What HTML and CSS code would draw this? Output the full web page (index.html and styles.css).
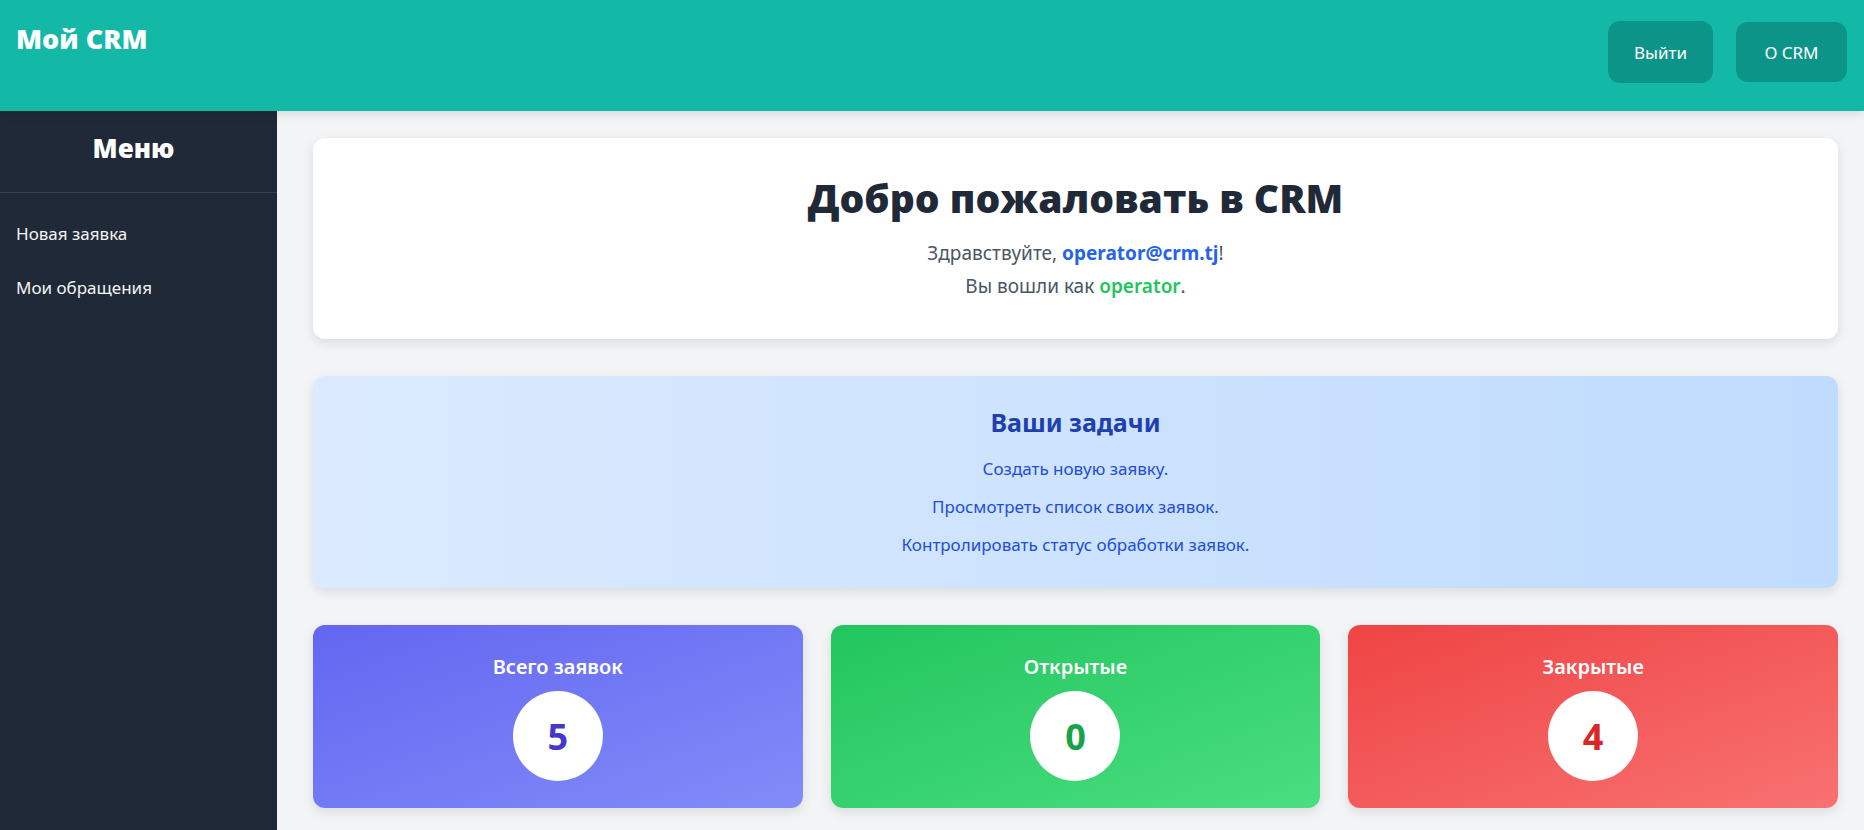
FILE: index.html
```html
<!DOCTYPE html>
<html lang="ru">
<head>
<meta charset="utf-8">
<title>Мой CRM</title>
<link rel="stylesheet" href="styles.css">
</head>
<body>
<header class="topbar">
  <h1 class="brand">Мой CRM</h1>
  <nav class="actions">
    <button class="btn btn-logout">Выйти</button>
    <a class="btn btn-about" href="#">О CRM</a>
  </nav>
</header>
<div class="layout">
  <aside class="sidebar">
    <h2 class="sidebar-title">Меню</h2>
    <ul class="menu">
      <li><a href="#">Новая заявка</a></li>
      <li><a href="#">Мои обращения</a></li>
    </ul>
  </aside>
  <main class="content">
    <section class="card welcome">
      <h2 class="welcome-title">Добро пожаловать в CRM</h2>
      <p class="welcome-line">Здравствуйте, <strong class="email">operator@crm.tj</strong>!</p>
      <p class="welcome-line">Вы вошли как <span class="role">operator</span>.</p>
    </section>
    <section class="card tasks">
      <h3 class="tasks-title">Ваши задачи</h3>
      <ul class="tasks-list">
        <li>Создать новую заявку.</li>
        <li>Просмотреть список своих заявок.</li>
        <li>Контролировать статус обработки заявок.</li>
      </ul>
    </section>
    <section class="stats">
      <div class="stat stat-total">
        <h4 class="stat-title">Всего заявок</h4>
        <div class="stat-value">5</div>
      </div>
      <div class="stat stat-open">
        <h4 class="stat-title">Открытые</h4>
        <div class="stat-value">0</div>
      </div>
      <div class="stat stat-closed">
        <h4 class="stat-title">Закрытые</h4>
        <div class="stat-value">4</div>
      </div>
    </section>
  </main>
</div>
</body>
</html>
```
FILE: styles.css
```css
* { box-sizing: border-box; }

html, body {
  margin: 0;
  padding: 0;
}

body {
  font-family: "Noto Sans", "Open Sans", sans-serif;
  background: #f3f4f6;
  color: #1f2937;
  height: 830px;
  overflow: hidden;
}

.topbar {
  height: 111px;
  background: #14b8a6;
  display: flex;
  justify-content: space-between;
  align-items: flex-start;
  padding: 0 17px 0 16px;
  box-shadow: 0 2px 10px rgba(0, 0, 0, 0.12);
  position: relative;
  z-index: 2;
}

.brand {
  margin: 0;
  padding-top: 19px;
  font-family: "Open Sans", "Noto Sans", sans-serif;
  font-weight: 800;
  font-size: 27px;
  line-height: 40px;
  color: #ffffff;
}

.actions {
  display: flex;
  align-items: flex-start;
  gap: 23px;
  padding-top: 21px;
}

.btn {
  display: flex;
  align-items: center;
  justify-content: center;
  background: #0d9488;
  color: #ffffff;
  border: none;
  border-radius: 12px;
  font-family: "Noto Sans", sans-serif;
  font-size: 17px;
  text-decoration: none;
  cursor: pointer;
}

.btn-logout {
  width: 105px;
  height: 62px;
}

.btn-about {
  width: 111px;
  height: 60px;
  margin-top: 1px;
}

.layout {
  display: flex;
  height: 719px;
}

.sidebar {
  width: 277px;
  flex: none;
  background: #1f2937;
  color: #ffffff;
}

.sidebar-title {
  margin: 0;
  height: 82px;
  padding: 17px 10px 0 0;
  text-align: center;
  font-family: "Open Sans", sans-serif;
  font-weight: 800;
  font-size: 26px;
  line-height: 40px;
  border-bottom: 1px solid #374151;
}

.menu {
  list-style: none;
  margin: 0;
  padding: 29px 16px;
}

.menu li {
  height: 54px;
}

.menu a {
  display: block;
  color: #f3f4f6;
  text-decoration: none;
  font-size: 17px;
  line-height: 24px;
}

.content {
  flex: 1;
  padding: 27px 26px 0 36px;
  display: flex;
  flex-direction: column;
  gap: 37px;
}

.card {
  border-radius: 12px;
  box-shadow: 0 4px 12px rgba(0, 0, 0, 0.1);
  text-align: center;
}

.welcome {
  background: #ffffff;
  height: 201px;
  padding-top: 36px;
}

.welcome-title {
  margin: 0 0 15px;
  font-family: "Open Sans", sans-serif;
  font-weight: 800;
  font-size: 39px;
  line-height: 48px;
  color: #1f2937;
}

.welcome-line {
  margin: 0;
  font-size: 19px;
  line-height: 33px;
  color: #4b5563;
}

.email {
  color: #2563eb;
  font-weight: 700;
}

.role {
  color: #22c55e;
  font-weight: 600;
}

.tasks {
  height: 212px;
  padding-top: 28px;
  background: linear-gradient(90deg, #dbeafe 0%, #bfdbfe 100%);
}

.tasks-title {
  margin: 0 0 10px;
  font-weight: 700;
  font-size: 25px;
  line-height: 36px;
  color: #1e40af;
}

.tasks-list {
  list-style: none;
  margin: 0;
  padding: 0;
}

.tasks-list li {
  font-size: 17px;
  line-height: 38px;
  color: #1d4ed8;
}

.stats {
  display: grid;
  grid-template-columns: repeat(3, 1fr);
  gap: 28px;
}

.stat {
  height: 183px;
  border-radius: 12px;
  box-shadow: 0 4px 12px rgba(0, 0, 0, 0.1);
  display: flex;
  flex-direction: column;
  align-items: center;
  padding-top: 29px;
  color: #ffffff;
}

.stat-total { background: linear-gradient(160deg, #6366f1 0%, #818cf8 100%); }
.stat-open { background: linear-gradient(160deg, #22c55e 0%, #4ade80 100%); }
.stat-closed { background: linear-gradient(160deg, #ef4444 0%, #f87171 100%); }

.stat-title {
  margin: 0 0 11px;
  font-weight: 600;
  font-size: 20px;
  line-height: 26px;
}

.stat-value {
  width: 90px;
  height: 90px;
  border-radius: 50%;
  background: #ffffff;
  display: flex;
  align-items: center;
  justify-content: center;
  font-weight: 700;
  font-size: 36px;
}

.stat-total .stat-value { color: #4338ca; }
.stat-open .stat-value { color: #16a34a; }
.stat-closed .stat-value { color: #dc2626; }
```
